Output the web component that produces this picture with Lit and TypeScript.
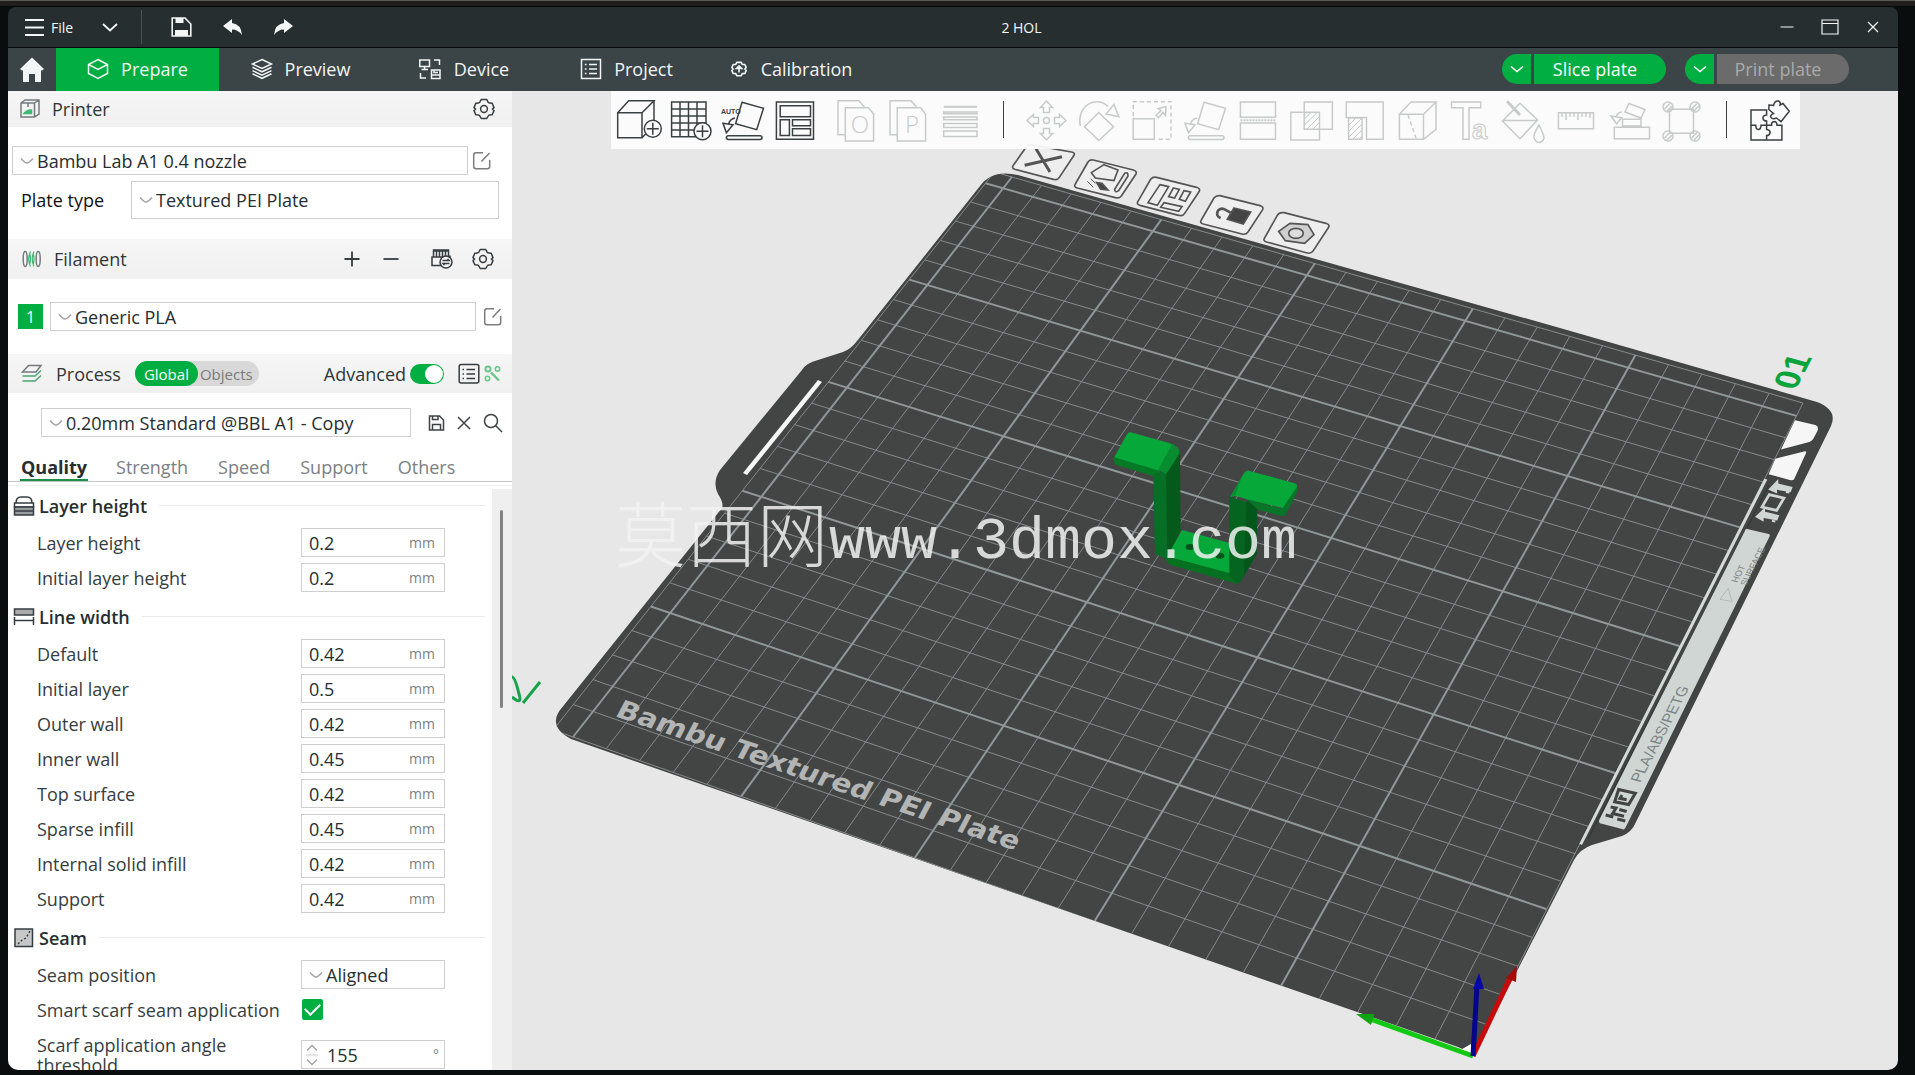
import { LitElement, html, svg, css } from "lit";
import { customElement, property, state } from "lit/decorators.js";
import { classMap } from "lit/directives/class-map.js";

type Pt = [number, number];

/* ---------- shared icons ---------- */

const icon = (w: number, h: number, body: unknown, cls = "icon") =>
  html`<svg class=${cls} width=${w} height=${h} viewBox="0 0 ${w} ${h}" aria-hidden="true">${body}</svg>`;

const chevron = icon(14, 8, svg`<path d="M1 1.5 Q5 6 7 6 Q9 6 13 1.5" />`, "icon chevron");

const gear = icon(22, 22, svg`
  <path d="M8.2 1.5 H13.8 L15.2 4.4 Q16 5 17 4.9 L19.2 5.2 L21 9.6 L19.4 11 L21 12.6 L19.2 16.8 L16.6 16.9 Q15.6 17.2 15.2 18 L13.8 20.5 H8.2 L6.8 18 Q6.2 17.2 5.4 16.9 L2.8 16.8 L1 12.6 L2.6 11 L1 9.6 L2.8 5.2 L5.4 4.9 Q6.4 4.8 6.8 4.2 Z" stroke-linejoin="round" />
  <circle cx="11" cy="11" r="3.4" />`);

const edit = icon(20, 20, svg`<path d="M11 1.7 H4 Q1.7 1.7 1.7 4 V15.5 Q1.7 17.7 4 17.7 H15.5 Q17.7 17.7 17.7 15.5 V9 M9.5 10.5 L17.5 2" />`, "icon soft");

const tabIcons = {
  prepare: icon(22, 22, svg`<path d="M11 1.5 L20.5 6.5 V15.5 L11 20.5 L1.5 15.5 V6.5 Z M1.5 6.5 L11 11.5 L20.5 6.5" />`),
  preview: icon(22, 22, svg`<path d="M11 1.5 L20.5 6 L11 10.5 L1.5 6 Z M1.5 9.3 L11 13.8 L20.5 9.3 M1.5 12.6 L11 17.1 L20.5 12.6 M1.5 15.8 L11 20.3 L20.5 15.8" />`),
  device: icon(24, 22, svg`<path d="M1.8 2 H11.5 V8.5 H1.8 Z M6.6 8.5 V11.5 M3.5 11.5 H10 M16 2 H21.5 V7 M2.5 15 V20 H8 M13.5 12 H22 V20.5 H13.5 Z M16 12 V14.5 H20 M13.5 17 H22" />`),
  project: icon(22, 22, svg`<path d="M1.5 1.5 H20.5 V20.5 H1.5 Z M9 6.5 H17 M9 11 H17 M9 15.5 H17 M4.8 6.5 H6.6 M4.8 11 H6.6 M4.8 15.5 H6.6" />`),
  calibration: icon(22, 18, svg`<g transform="translate(4 1) scale(0.89)"><path d="M6.5 1.5 H11.5 L12.6 3.8 L15.5 3.9 L17 7.2 L15.6 9 L17 10.8 L15.5 14.1 L12.6 14.2 L11.5 16.5 H6.5 L5.4 14.2 L2.5 14.1 L1 10.8 L2.4 9 L1 7.2 L2.5 3.9 L5.4 3.8 Z" stroke-linejoin="round" stroke-width="1.8" /><path d="M9 13 V6 M6 8.4 L9 5.4 L12 8.4 Z" stroke-width="1.8" /></g>`),
};

/* ---------- toolbar drawings, each on a 44 x 44 field ---------- */

const plusBadge = (cx: number, cy: number) => svg`
  <circle class="badge" cx=${cx} cy=${cy} r="8.5" />
  <path d="M${cx - 6} ${cy} H${cx + 6} M${cx} ${cy - 6} V${cy + 6}" />`;
const layFlat = svg`
  <path d="M21 5.3 L42.5 11.3 L35.7 32.7 L14.6 26.7 Z M2 26.3 L12 27.7 L5.4 35.7 Z M14 21 Q9 22 7.5 27" />
  <rect x="5.4" y="38.7" width="35.6" height="3.8" rx="1.9" />`;
const sheets = (letter: string) => svg`
  <path d="M11 37.7 H4 V3.7 H25 L30 9.5 V10.7 M11.3 10.7 H34.5 L39.6 17 V44 H11.3 Z" />
  <text class="thin" x="26" y="36" text-anchor="middle" font-size="24">${letter}</text>`;
const cross = [0, 90, 180, 270].map(
  (a) => svg`<path transform="rotate(${a} 22.5 23.5)" d="M22.5 4 L28.5 10.5 H25.5 V15.5 H19.5 V10.5 H16.5 Z" />`,
);

const addTools = [
  { name: "Add", body: svg`<path d="M25 40.7 H0.7 V15.7 H25 Z M0.7 15.7 L11.7 3.7 H37 L25 15.7 M37 3.7 V23 M25 40.7 L29 36.5" />${plusBadge(35.8, 31.7)}` },
  { name: "Add plate", body: svg`<path d="M2.6 5 H37 V39.7 H2.6 Z M11 5 V39.7 M19.5 5 V39.7 M28 5 V39.7 M2.6 12 H37 M2.6 19 H37 M2.6 26 H37 M2.6 33 H37" />${plusBadge(33.5, 34.3)}` },
  { name: "Auto orient", body: svg`${layFlat}<text class="tiny" x="0" y="17" font-size="7">AUTO</text>` },
  { name: "Arrange", body: svg`<path d="M3.4 5 H40.5 V42.3 H3.4 Z M7.2 8.7 H37.5 V19.7 H7.2 Z M7.2 22.7 H16.4 V38.5 H7.2 Z M19.5 22.7 H37.5 V28.7 H19.5 Z M19.5 31.7 H37.5 V38.5 H19.5 Z" />` },
];
const splitTools = [
  { name: "Split to objects", body: sheets("O") },
  { name: "Split to parts", body: sheets("P") },
  { name: "Variable layer height", body: svg`<path d="M5.7 9.8 H39" stroke-width="2" /><path d="M5.7 15 H39 V16.8 H5.7 Z M5.7 20 H39 V22.8 H5.7 Z M5.7 26.4 H39 V30.6 H5.7 Z M5.7 34 H39 V39.6 H5.7 Z" />` },
];
const editTools = [
  { name: "Move", body: svg`<circle cx="22.5" cy="23.5" r="3" />${cross}` },
  { name: "Rotate", body: svg`<path d="M21.8 15.5 L36.5 29.7 L21.8 43.5 L7.5 29.7 Z M3.4 29 A17 19 0 0 1 31 9.5 M37 7.5 L41.7 19.7 L29 17 Z" />` },
  { name: "Scale", body: svg`<path d="M3.2 21.7 H24.3 V42.3 H3.2 Z M26 18.5 L31 13.5 L28 11.5 L36 9.7 L35.5 18.5 L33 15.5 L28.5 20.7 Z" /><path d="M3.2 19 V4.7 H41 V42.3 H27" stroke-dasharray="4 3" />` },
  { name: "Lay on face", body: layFlat },
  { name: "Cut", body: svg`<path d="M4.4 5 H39.5 V20.3 H4.4 Z M4.4 26 H39.5 V42.3 H4.4 Z" /><path d="M4.4 23.2 H39.5" stroke-width="2" stroke-dasharray="2 1" />` },
  { name: "Mesh boolean", body: svg`<path d="M15.2 5 H43.4 V32.3 H15.2 Z M1.8 15.3 H30.5 V43 H1.8 Z" /><path d="M15.5 22 L22 15.5 M15.5 28 L28 15.5 M18 32 L30 20 M24 32 L30 26" stroke-width="1" />` },
  { name: "Support painting", body: svg`<path d="M4.3 20.5 V5 H41.2 V42.3 H24.5 V20.5 Z M6.6 21 H20 V42.3 H6.6 Z" /><path d="M7 28 L14 21 M7 34 L20 21 M7 40 L20 27 M11 42 L20 33 M17 42 L20 39" stroke-width="1" />` },
  { name: "Seam painting", body: svg`<path d="M4.4 17.3 H28.5 V42.3 H4.4 Z M4.4 17.3 L16 5 H41 L28.5 17.3 M41 5 V32.3 L28.5 42.3" /><path d="M13 18 L21 41" stroke-dasharray="4 3" />` },
  { name: "Text", body: svg`<path d="M3.6 5 H32.7 V10.7 H21 V42.3 H15 V10.7 H3.6 Z" /><text class="outline" x="24" y="42" font-size="27">a</text>` },
  { name: "Color painting", body: svg`<path d="M19 6.3 L36.6 23 L19 41.7 L1.5 24 Z M1.5 23.5 H36.6 M38 28 Q32 38 33 41 Q35 45.5 38 45.5 Q42 45 43 41 Q43 38 38 28 Z" /><path d="M6 4.3 L19 18" stroke-width="3" />` },
  { name: "Measure", body: svg`<path d="M4.4 15.7 H39.5 V31.7 H4.4 Z M8 16 V20 M12 16 V23 M16 16 V20 M20 16 V20 M24 16 V23 M28 16 V20 M32 16 V20 M36 16 V21" />` },
  { name: "Assembly", body: svg`<path d="M7.3 30.3 H42.5 V41.7 H7.3 Z M15.5 22.3 H34 V29 H15.5 Z M22 6.5 L38 12.5 L34 21 L18 15 Z M4 19 L14.7 20.7 L9.6 26.7 Z M14.7 15 Q10 16 9 20" />` },
  { name: "Fuzzy skin", body: svg`<path d="M9.5 12.3 H33.5 V36.3 H9.5 Z" />${[[8, 10], [35, 10], [8, 39], [35, 39]].map(([x, y]) => svg`<circle cx=${x} cy=${y} r="5" /><path d="M${x - 3.5} ${y + 2} L${x + 2} ${y - 3.5} M${x - 1} ${y + 4} L${x + 4} ${y - 1}" />`)}` },
];
const assemblyView = svg`
  <path d="M3 13 H18.6 V18 Q14.5 18.5 15 21.5 Q15.5 24 18.6 24 V28.3 H13 Q13 32.5 10.3 32.5 Q7.6 32.5 7.8 28.3 H3 Z" />
  <path d="M3 28.3 V43 H33.9 V28.3 H29 Q29 24.5 26 24.5 Q23.3 24.8 23.5 28.3 H18.6 V32.5 Q22.5 33 22 36 Q21.5 38.5 18.6 38.5 V43" />
  <path d="M21 8 L25.5 8.5 Q26.5 3.5 30.6 4 Q33 5 32 8 L35 6.5 L41.3 14.3 L33 24.7 L28.5 21 Q24 23 22.5 19.5 Q23 17 25.5 16.5 L20.8 12.5 Z" />`;

/* ---------- build plate projection ---------- */

const SIZE = 256;

/** Projective map that takes the unit square to the given quad. */
function projection(p00: Pt, p10: Pt, p11: Pt, p01: Pt) {
  const dx1 = p10[0] - p11[0], dx2 = p01[0] - p11[0], sx = p00[0] - p10[0] + p11[0] - p01[0];
  const dy1 = p10[1] - p11[1], dy2 = p01[1] - p11[1], sy = p00[1] - p10[1] + p11[1] - p01[1];
  const det = dx1 * dy2 - dx2 * dy1;
  const g = (sx * dy2 - dx2 * sy) / det;
  const h = (dx1 * sy - sx * dy1) / det;
  const a = p10[0] - p00[0] + g * p10[0], b = p01[0] - p00[0] + h * p01[0];
  const d = p10[1] - p00[1] + g * p10[1], e = p01[1] - p00[1] + h * p01[1];
  return (u: number, v: number): Pt => {
    const w = g * u + h * v + 1;
    return [(a * u + b * v + p00[0]) / w, (d * u + e * v + p00[1]) / w];
  };
}

const unit = projection([1473, 1055], [1803, 403], [1012, 177], [573, 737]);
const bed = (x: number, y: number) => unit(x / SIZE, y / 250).map((n) => n.toFixed(1)).join(" ");

const marks = [...Array(26).keys()].map((i) => i * 10);
const gridPath = (values: number[]) =>
  values.map((v) => `M${bed(v, 0)} L${bed(v, SIZE)} M${bed(0, v)} L${bed(SIZE, v)}`).join(" ");
const thinGrid = gridPath([...marks.filter((v) => v % 50 !== 0), 0, SIZE]);
const boldGrid = gridPath(marks.filter((v) => v % 50 === 0 && v > 0));

const platePath = `M1018 175 L1560 328 L1817 402 Q1838 410 1831 426 L1636 822 Q1632 832 1622 836
  L1592 845 Q1580 849 1574 860 L1478 1047 Q1472 1054 1458 1047 L571 739 Q548 727 560 710 L722 508 Q724 503 718 494 Q712 482 720 470
  L802 370 Q806 363 818 360 L843 352 Q851 349 857 341 L980 186 Q992 169 1018 175 Z`;

const scene = svg`
  <defs><clipPath id="plate-clip"><path d=${platePath} /></clipPath></defs>
  <path class="plate" d=${platePath} />
  <g clip-path="url(#plate-clip)">
    <path class="grid" d=${thinGrid} />
    <path class="grid bold" d=${boldGrid} />
  </g>
  <path class="slot" d="M818 380 L822 382 L747 475 L743 473 Z" />
  <text class="plate-name" transform="matrix(0.948 0.318 -0.42 0.8 614 716)">Bambu Textured PEI Plate</text>
  <path class="mark" d="M512 677 Q515 677 519 694 Q522 703 516 700 L512 697 M540 682 L523 703" />

  <g transform="translate(1480 330) scale(0.3333 0.3444)">
    <path class="slot" d="M945 262 L1006 276 Q1018 280 1012 294 L1000 316 Q997 322 988 325 L903 347 Z M886 374 L975 352 Q980 352 978 358 L943 432 Q940 438 932 436 L866 419 Z" />
    <path d="M853 432 L862 434 L306 1495 L298 1492 Z" fill="#d3dad8" />
    <path d="M867 450 L614 932 L324 1478" stroke="#2f3535" stroke-width="3" fill="none" />
    <path d="M798 577 L866 592 Q872 594 868 601 L436 1446 Q432 1452 426 1449 L360 1432 Q355 1428 358 1422 Z" fill="#cfd6d4" />
    <path d="M868 478 L912 488 L890 524 L846 514 Z" fill="none" stroke="#cfd6d4" stroke-width="8" />
    <path d="M870 462 L892 440 L892 448 L934 458 L930 468 L888 460 L888 470 Z M918 470 L928 472 M830 542 L852 522 L852 530 L894 540 L890 550 L848 542 L848 552 Z M876 554 L886 556" fill="#cfd6d4" stroke="#cfd6d4" stroke-width="6" />
    <path d="M745 750 L720 782 L756 788 Z" fill="none" stroke="#a3abaa" stroke-width="2" />
    <path d="M392 1385 L408 1388 L398 1404 L432 1412 M377 1408 L400 1414 M412 1420 L436 1426 M418 1392 L440 1398 M416 1334 L466 1345 L446 1378 L404 1370 Z M426 1350 L420 1360 L440 1364" fill="none" stroke="#424444" stroke-width="9" />
  </g>
  <text class="plate-note" font-size="15" transform="matrix(0.46 -0.888 0.97 0.26 1640 783)">PLA/ABS/PETG</text>
  <text class="plate-note" font-size="9" transform="matrix(0.46 -0.888 0.97 0.26 1737 583)">HOT</text>
  <text class="plate-note" font-size="9" transform="matrix(0.46 -0.888 0.97 0.26 1746 586)">SURFACE</text>
  <text class="plate-no" transform="matrix(0.46 -0.888 0.97 0.26 1795 391)">01</text>

  <g class="tags" transform="translate(980 140) scale(0.3333)">
    <path class="card" d="M150 14 L274 36 Q286 38 282 46 L238 112 Q232 122 220 118 L104 88 Q94 84 100 76 L138 22 Q142 14 150 14 Z" />
    <path class="card" d="M340 60 L460 90 Q472 94 468 102 L424 168 Q418 176 406 173 L292 144 Q280 140 286 132 L324 66 Q328 58 340 60 Z" />
    <path class="card" d="M530 112 L650 142 Q662 146 658 154 L614 220 Q608 230 596 226 L480 196 Q468 192 474 184 L512 118 Q518 110 530 112 Z" />
    <path class="card" d="M720 167 L840 197 Q852 201 848 209 L804 276 Q798 285 786 282 L670 252 Q658 248 664 240 L702 174 Q708 166 720 167 Z" />
    <path class="card" d="M912 218 L1038 250 Q1050 254 1046 262 L1000 332 Q994 342 982 339 L860 306 Q848 302 854 294 L892 226 Q898 216 912 218 Z" />
    <path d="M168 26 L210 96 M134 76 L246 50" stroke-width="9" />
    <path d="M372 74 L414 90 L402 122 L346 114 L334 98 Z M434 100 Q444 94 444 108 L416 152 Q404 160 404 148 Z" />
    <path d="M322 124 L340 142 M332 116 L346 130" stroke-width="3" />
    <path d="M350 128 L366 130 L384 150 L362 148 Z" fill="#444" />
    <path d="M540 134 L566 140 L532 196 L504 188 Z M580 144 L598 148 L584 174 L566 170 Z M612 152 L632 156 L616 184 L598 178 Z M552 188 L606 200 L596 214 L542 202 Z" />
    <path d="M762 204 L812 216 L790 252 L742 238 Z" fill="#444" />
    <path d="M756 220 L734 208 Q722 202 714 212 Q706 228 722 234" stroke-width="8" />
    <path d="M930 250 L984 254 L1002 284 L974 310 L916 302 L896 274 Z" fill="#cfcfcf" />
    <ellipse cx="948" cy="280" rx="22" ry="15" fill="#ddd" />
  </g>

  <g transform="translate(1060 400) scale(0.3333)">
    <path d="M160 170 L300 212 L300 235 L280 228 L170 195 Q160 190 160 170 Z" fill="#057a26" />
    <path d="M280 222 L322 214 L322 478 L285 462 Z" fill="#076e25" />
    <path d="M318 218 L360 156 L362 392 L322 472 Z" fill="#055a1b" />
    <path d="M212 97 L330 130 Q358 140 358 160 L318 222 Q306 212 290 210 L163 172 L200 104 Q205 96 212 97 Z" fill="#07a83a" />
    <path d="M336 132 Q358 140 358 160 L318 222 Q306 212 294 211 Z" fill="#088c30" />
    <path d="M366 390 L512 430 L520 524 L320 472 Z" fill="#07a83a" />
    <ellipse cx="390" cy="441" rx="13" ry="9" fill="#04531a" />
    <ellipse cx="480" cy="467" rx="13" ry="9" fill="#04531a" />
    <path d="M318 468 L510 520 L540 548 Q532 552 520 548 L330 494 Q316 488 318 468 Z" fill="#05701f" />
    <path d="M508 290 L592 316 L590 462 L540 548 Q520 550 508 522 Z" fill="#05641f" />
    <path d="M560 302 L592 316 L590 462 L552 528 Z" fill="#04561a" />
    <path d="M560 298 L664 326 L712 256 L713 272 Q695 312 676 344 Q670 350 660 347 L592 328 Z" fill="#067527" />
    <path d="M566 212 L704 250 Q714 254 710 262 L668 324 L560 298 Q524 284 510 292 L552 220 Q558 210 566 212 Z" fill="#07a83a" />
    <path d="M545 232 L526 286 Q516 286 510 292 Z" fill="#088c30" />
  </g>

  <path d="M1457 1052 L1471 1044 L1473 1056 Z" fill="#fff" />
  <path d="M1473 1056 L1370 1019" stroke="#12c812" stroke-width="5" />
  <path d="M1356 1014 L1374 1014 L1371 1025 Z" fill="#10a510" />
  <path d="M1473 1056 L1511 976" stroke="#c90a0a" stroke-width="5" />
  <path d="M1517 966 L1516 982 L1506 978 Z" fill="#a50808" />
  <path d="M1473 1056 L1477 986" stroke="#05058c" stroke-width="5" />
  <path d="M1479 973 L1484 989 L1473 989 Z" fill="#0808a8" />

  <text class="watermark"><tspan class="han" x="615" y="561">莫西网</tspan><tspan x="829" y="558">www.3dmox.com</tspan></text>
`;

/* ---------- settings data ---------- */

type Row = { label: string; value: string; kind?: "select" | "check" | "spin" };
const mm = (label: string, value: string): Row => ({ label, value });

const sections: { title: string; icon: unknown; rows: Row[] }[] = [
  {
    title: "Layer height",
    icon: icon(22, 22, svg`<path d="M3 8 Q3 2 8 2 H14 Q19 2 19 8 M1.5 8 H20.5 V12 H1.5 Z" /><path d="M1.5 12 H20.5 V16 H1.5 Z M1.5 16 H20.5 V20 H1.5 Z" fill="#9a9d9e" />`),
    rows: [mm("Layer height", "0.2"), mm("Initial layer height", "0.2")],
  },
  {
    title: "Line width",
    icon: icon(22, 22, svg`<path d="M1.5 3 H20.5 V9 H1.5 Z" fill="#a9abac" /><path d="M1.5 11 V19 M20.5 11 V19 M1.5 14.5 H20.5" />`),
    rows: [
      mm("Default", "0.42"), mm("Initial layer", "0.5"), mm("Outer wall", "0.42"), mm("Inner wall", "0.45"),
      mm("Top surface", "0.42"), mm("Sparse infill", "0.45"), mm("Internal solid infill", "0.42"), mm("Support", "0.42"),
    ],
  },
  {
    title: "Seam",
    icon: icon(22, 22, svg`<path d="M2 2 H19.5 V19.5 H2 Z" fill="#c6c8c8" /><path d="M5 17 L9 13 L13 11 L17 4" stroke-dasharray="2 2" />`),
    rows: [
      { label: "Seam position", value: "Aligned", kind: "select" },
      { label: "Smart scarf seam application", value: "on", kind: "check" },
      { label: "Scarf application angle threshold", value: "155", kind: "spin" },
    ],
  },
];

const shared = css`
  * { box-sizing: border-box; }
  button, input, select { font: inherit; color: inherit; margin: 0; }
  button { border: 0; background: none; padding: 0; display: inline-flex; align-items: center; justify-content: center; cursor: pointer; }
  .icon { display: block; flex: none; fill: none; stroke: currentColor; stroke-width: 1.5; overflow: visible; }
  .chevron { color: #a4a4a4; }
  .soft { color: #7d7d7d; }
`;

/* ---------- drop-down ---------- */

@customElement("pick-box")
class PickBox extends LitElement {
  @property() value = "";
  @property() name = "";

  static styles = [shared, css`
    :host { display: block; min-width: 0; }
    .box { height: 100%; display: flex; align-items: center; border: 1px solid #cecece; background: #fff; padding-left: 7px; }
    .pick { appearance: none; border: 0; outline: 0; background: transparent; flex: 1; min-width: 0; height: 100%; padding: 0 0 0 3px; color: #262e30; }
  `];

  render() {
    return html`<label class="box">${chevron}
      <select class="pick" aria-label=${this.name}><option>${this.value}</option></select></label>`;
  }
}

/* ---------- left panel ---------- */

@customElement("side-panel")
class SidePanel extends LitElement {
  @state() private page = "Quality";
  @state() private scope = "Global";

  static styles = [shared, css`
    :host { display: flex; flex-direction: column; width: 504px; flex: none; min-height: 0; background: #fff; color: #363d40; line-height: 24px; }
    .head { display: flex; align-items: center; background: linear-gradient(#f6f6f6, #f0f0f0); flex: none; }
    .head h2 { margin: 0; font-size: 18px; font-weight: 400; color: #2f373a; flex: 1; }
    .printer-head { height: 36px; padding: 0 17px 0 11px; gap: 11px; }
    .filament-head { height: 40px; padding: 0 18px 0 14px; gap: 12px; margin-top: 20px; }
    .process-head { height: 39px; padding: 0 10px 0 13px; margin-top: 23px; }
    .process-head h2 { flex: none; margin: 0 14px 0 13px; }
    .filament-tools { display: flex; align-items: center; gap: 19px; }
    .ams { margin-left: 10px; }
    .line { display: flex; align-items: center; flex: none; }
    .line pick-box { flex: 1; height: 29px; }
    .printer-line { margin-top: 19px; padding: 0 20px 0 4px; gap: 4px; }
    .type-line { margin-top: 6px; padding: 0 13px; color: #111; }
    .type-line .name { width: 110px; }
    .type-line pick-box { height: 38px; }
    .filament-line { margin-top: 23px; padding: 0 9px 0 10px; gap: 7px; }
    .swatch { width: 25px; height: 25px; background: #00ae42; color: #fff; font-size: 16px; }
    .preset-line { margin-top: 15px; padding: 0 9px 0 33px; gap: 12px; color: #3d4446; }
    .preset-line pick-box { margin-right: 5px; }
    .scope { display: flex; border-radius: 13px; background: #d8d8d8; height: 25px; font-size: 15px; }
    .scope button { padding: 0 6px 0 2px; border-radius: 13px; color: #7a7a7a; }
    .scope button.on { background: #00ae42; color: #fff; padding: 0 9px; }
    .advanced { display: flex; align-items: center; margin-left: auto; gap: 4px; font-size: 18px; color: #2f373a; }
    .toggle { appearance: none; width: 34px; height: 20px; border-radius: 10px; background: #00ae42; display: flex; align-items: center; justify-content: flex-end; padding: 0 1px; }
    .toggle::before { content: ""; width: 18px; height: 18px; border-radius: 9px; background: #fff; }
    .list { margin: 0 3px 0 14px; }
    .cut { color: #6cc48a; }
    .tabs { display: flex; margin-top: 18px; height: 27px; padding-left: 12px; gap: 26px; border-bottom: 1px solid #c2c6c5; flex: none; }
    .tabs button { color: #7b8082; padding: 0 2px; border-bottom: 2px solid transparent; }
    .tabs button.on { color: #262e30; font-weight: 700; padding: 0 1px; border-color: #1d8f4b; }
    .settings { display: flex; flex: 1; min-height: 0; margin-top: 3px; border-top: 1px solid #f1f1f1; padding-top: 3px; }
    .rows { flex: 1; min-width: 0; overflow: hidden; padding-left: 5px; }
    .track { width: 20px; background: #efefef; padding: 21px 8px; }
    .thumb { width: 3px; height: 198px; border-radius: 2px; background: #828282; }
    .section { margin-bottom: 5px; }
    .section-head { display: flex; align-items: center; height: 33px; margin-bottom: 3px; gap: 4px; }
    .section-head h3 { margin: 0; font-size: 18px; font-weight: 600; color: #262e30; }
    .section-head::after { content: ""; flex: 1; height: 1px; background: #eaeaea; margin: 0 7px 0 8px; }
    .row { display: flex; align-items: center; height: 35px; padding: 0 47px 0 24px; }
    .row.tall { height: 55px; }
    .row .name { flex: 1; line-height: 20px; }
    .tall .name { padding-right: 60px; }
    .field { width: 144px; height: 29px; border: 1px solid #cecece; display: flex; align-items: center; padding: 0 9px 0 7px; background: #fff; }
    .value { border: 0; outline: 0; padding: 0; background: none; flex: 1; min-width: 0; width: 40px; color: #262e30; }
    .unit { font-size: 14px; color: #7b7f80; }
    .spin { padding: 0 5px 0 4px; gap: 9px; }
    .row pick-box { width: 144px; height: 29px; }
    .check-cell { width: 144px; display: flex; }
    .check { appearance: none; width: 21px; height: 21px; border-radius: 2px; background: #00ae42; margin-left: 1px; display: grid; place-items: center; }
    .check::before { content: ""; width: 13px; height: 7px; border: solid #fff; border-width: 0 0 2px 2px; rotate: -45deg; translate: 0 -2px; }
  `];

  private renderField(row: Row, id: string) {
    switch (row.kind) {
      case "select":
        return html`<pick-box value=${row.value} name=${row.label}></pick-box>`;
      case "check":
        return html`<span class="check-cell"><input class="check" type="checkbox" id=${id} checked /></span>`;
      case "spin":
        return html`<span class="field spin">
          ${icon(12, 22, svg`<path d="M1 6.5 L6 1.5 L11 6.5 M1 15.5 L6 20.5 L11 15.5" /><path d="M0 11 H12" stroke="#ddd" />`, "icon chevron")}
          <input class="value" id=${id} .value=${row.value} /><span class="unit">°</span></span>`;
      default:
        return html`<span class="field"><input class="value" id=${id} .value=${row.value} /><span class="unit">mm</span></span>`;
    }
  }

  render() {
    return html`
      <div class="head printer-head">
        ${icon(22, 22, svg`<path d="M2 5 L6 2 H20 V16 L15.5 19 H2 Z M2 5 H15.5 V19 M15.5 5 L20 2" stroke="#747b7d" /><path d="M9 5 V9" stroke="#747b7d" /><path d="M5 15.5 Q8 11.5 12.5 12 V15.5 Z" fill="#3fb974" stroke="#3fb974" />`)}
        <h2>Printer</h2>
        <button aria-label="Printer settings">${gear}</button>
      </div>
      <div class="line printer-line">
        <pick-box value="Bambu Lab A1 0.4 nozzle" name="Printer"></pick-box>
        <button aria-label="Edit printer">${edit}</button>
      </div>
      <div class="line type-line"><span class="name">Plate type</span><pick-box value="Textured PEI Plate" name="Plate type"></pick-box></div>

      <div class="head filament-head">
        ${icon(20, 20, svg`<ellipse cx="3.2" cy="10" rx="2" ry="7.5" stroke="#747b7d" /><path d="M8.5 2.5 Q5 10 8.5 17.5 M12 2.5 Q8.5 10 12 17.5 M7.5 4 Q9.5 10 7.5 16 M11 4 Q13 10 11 16" stroke="#3fb974" stroke-width="1.2" /><ellipse cx="16.2" cy="10" rx="2" ry="7.5" stroke="#747b7d" />`)}
        <h2>Filament</h2>
        <span class="filament-tools">
          <button aria-label="Add filament">${icon(20, 20, svg`<path d="M2.5 10 H17.5 M10 2.5 V17.5" stroke-width="1.8" />`)}</button>
          <button aria-label="Remove filament">${icon(20, 20, svg`<path d="M2.5 10 H17.5" stroke-width="1.8" />`)}</button>
          <button class="ams" aria-label="Sync filaments">${icon(23, 22, svg`<path d="M11 17.5 H2 V9 H20 V7.5 M3.5 9 V2 H18.5 V8 M6.5 3 V9 M9.5 3 V9 M12.5 3 V9 M15.5 3 V8 M3.5 3 H18.5" /><circle cx="16" cy="14" r="6" fill="#f3f3f3" /><path d="M12.5 12.5 H19 L17.5 11 M19.5 15.5 H13 L14.5 17" />`)}</button>
          <button aria-label="Filament settings">${gear}</button>
        </span>
      </div>
      <div class="line filament-line">
        <button class="swatch">1</button>
        <pick-box value="Generic PLA" name="Filament"></pick-box>
        <button aria-label="Edit filament">${edit}</button>
      </div>

      <div class="head process-head">
        ${icon(22, 22, svg`<path d="M7.5 2.5 H20 L15 9 H1.5 Z" stroke="#747b7d" /><path d="M1.5 13 H14 L20 7.5 M1.5 18 H14 L20 12.5" stroke="#4aa874" />`)}
        <h2>Process</h2>
        <span class="scope">${["Global", "Objects"].map((s) => html`
          <button class=${classMap({ on: this.scope === s })} @click=${() => (this.scope = s)}>${s}</button>`)}</span>
        <label class="advanced">Advanced<input class="toggle" type="checkbox" checked /></label>
        <button class="list" aria-label="Parameter table">${icon(22, 22, svg`<rect x="1.2" y="1.5" width="19.6" height="18.5" rx="2" /><path d="M8.5 6.5 H17 M8.5 11 H17 M8.5 15.5 H17 M4.5 6.5 H6 M4.5 11 H6 M4.5 15.5 H6" />`)}</button>
        <button class="cut" aria-label="Compare presets">${icon(19, 20, svg`<circle cx="5" cy="5" r="2.6" stroke-width="2" /><path d="M8 8.5 L16 16.5" stroke-width="2.4" /><circle cx="14.5" cy="5" r="2.2" /><circle cx="4.5" cy="14.5" r="2.2" />`)}</button>
      </div>
      <div class="line preset-line">
        <pick-box value="0.20mm Standard @BBL A1 - Copy" name="Process preset"></pick-box>
        <button aria-label="Save preset">${icon(17, 18, svg`<path d="M1.5 2 H11.5 L15.5 6 V16 H1.5 Z M4.5 2 V5.5 H10 V2 M4.5 16 V10.5 H12.5 V16" />`)}</button>
        <button aria-label="Delete preset">${icon(14, 14, svg`<path d="M1 1 L13 13 M13 1 L1 13" />`)}</button>
        <button aria-label="Search">${icon(20, 20, svg`<circle cx="8" cy="8" r="6.5" /><path d="M12.8 12.8 L19 19" />`)}</button>
      </div>
      <nav class="tabs">${["Quality", "Strength", "Speed", "Support", "Others"].map((t) => html`
        <button class=${classMap({ on: this.page === t })} @click=${() => (this.page = t)}>${t}</button>`)}</nav>

      <div class="settings">
        <div class="rows">${sections.map((s, i) => html`
          <section class="section">
            <div class="section-head">${s.icon}<h3>${s.title}</h3></div>
            ${s.rows.map((r, j) => html`
              <div class=${classMap({ row: true, tall: r.kind === "spin" })}>
                <label class="name" for="f${i}-${j}">${r.label}</label>${this.renderField(r, `f${i}-${j}`)}
              </div>`)}
          </section>`)}</div>
        <div class="track"><div class="thumb"></div></div>
      </div>`;
  }
}

/* ---------- 3D view ---------- */

@customElement("plate-view")
class PlateView extends LitElement {
  static styles = [shared, css`
    :host { display: flex; flex: 1; min-width: 0; position: relative; background: #e7e7e7; justify-content: center; align-items: flex-start; overflow: hidden; }
    .scene { position: absolute; inset: 0; width: 100%; height: 100%; display: block; }
    .plate { fill: #434545; }
    .grid { fill: none; stroke: #858a8a; stroke-width: 1; }
    .grid.bold { stroke: #8f9797; stroke-width: 2; }
    .slot { fill: #f6f6f6; }
    .mark { fill: none; stroke: #16a34a; stroke-width: 3; }
    .plate-name { font: bold 29px "DejaVu Sans", sans-serif; fill: #b3b5b5; }
    .plate-note { font-family: "Liberation Sans", sans-serif; fill: #7c8484; }
    .plate-no { font: bold 34px "Liberation Sans", sans-serif; fill: #0ba43c; }
    .tags { fill: none; stroke: #555; stroke-width: 5; }
    .tags .card { fill: #eeeeee; }
    .watermark { font: 60px "Liberation Mono", monospace; fill: #f2f2f2; fill-opacity: 0.85; }
    .han { font: 300 71px "Noto Sans CJK SC", sans-serif; }
    .tools { position: relative; display: flex; align-items: center; height: 58px; padding: 0 3px 2px 2px; background: rgba(252, 252, 252, 0.93); color: #3a4042; }
    .tools button { width: 52px; height: 44px; }
    .group { display: flex; }
    .split { margin-left: 9px; color: #c8caca; }
    .edit { color: #c8caca; }
    .edit button { width: 53px; }
    .tools .last { width: 54px; }
    .rule { width: 1px; height: 37px; background: #3a4042; margin: 0 16px 0 17px; }
    .badge { fill: #fbfbfb; }
    .thin, .tiny { fill: currentColor; stroke: none; font-family: "Open Sans", sans-serif; }
    .thin { font-weight: 300; }
    .tiny { font-weight: 700; font-family: "Liberation Sans", sans-serif; }
    .outline { fill: none; stroke-width: 1; font: bold 27px "Liberation Sans", sans-serif; }
  `];

  private renderTools(tools: { name: string; body: unknown }[], cls: string, disabled: boolean) {
    return html`<div class="group ${cls}">${tools.map((t) => html`
      <button aria-label=${t.name} ?disabled=${disabled}>${icon(44, 44, t.body)}</button>`)}</div>`;
  }

  render() {
    return html`
      <svg class="scene" viewBox="512 91 1386 979" preserveAspectRatio="xMidYMid slice" role="img" aria-label="Build plate">${scene}</svg>
      <div class="tools">
        ${this.renderTools(addTools, "add", false)}
        ${this.renderTools(splitTools, "split", true)}
        <span class="rule"></span>
        ${this.renderTools(editTools, "edit", true)}
        <span class="rule"></span>
        <button class="last" aria-label="Assembly view">${icon(44, 44, assemblyView)}</button>
      </div>`;
  }
}

/* ---------- application window ---------- */

@customElement("app-root")
class AppRoot extends LitElement {
  @state() private tab = "Prepare";

  static styles = [shared, css`
    :host { display: block; height: 100vh; background: #040707; font: 18px "Open Sans", "Noto Sans", "Noto Sans CJK SC", sans-serif; }
    .desk { height: 100%; display: flex; flex-direction: column; padding: 7px 17px 5px 8px; background: linear-gradient(#5a5a55 0 1px, #201f1d 1px 6px, #050808 6px 7px, #0a0d0d 7px); }
    .window { flex: 1; min-height: 0; display: flex; flex-direction: column; border-radius: 8px 8px 10px 10px; overflow: hidden; background: #272e2f; }
    .title-bar { display: flex; align-items: center; height: 41px; border-bottom: 1px solid #050808; color: #f4f6f6; font-size: 14px; flex: none; }
    .left { display: flex; align-items: center; width: 294px; padding-left: 16px; }
    .file { gap: 6px; }
    .more { margin-left: 29px; }
    .bar { width: 1px; height: 34px; background: #4a5254; margin: 0 29px 0 23px; }
    .quick { display: flex; align-items: center; gap: 30px; }
    .title { flex: 1; text-align: center; padding-right: 24px; }
    .win-btn { width: 43px; height: 40px; }
    .win { display: flex; padding-right: 4px; }
    .nav { display: flex; align-items: center; height: 43px; background: #3b4446; color: #f2f5f5; flex: none; }
    .home { width: 48px; height: 100%; }
    .tab { width: 163px; height: 100%; gap: 12px; padding-bottom: 1px; color: #f2f5f5; }
    .tab.on { background: #00ae42; }
    .actions { margin-left: auto; display: flex; gap: 19px; padding: 0 49px 2px 0; }
    .pair { display: flex; gap: 3px; }
    .pair button { height: 30px; background: #00ae42; color: #fff; }
    .pair .drop { width: 29px; border-radius: 15px 0 0 15px; }
    .pair .go { width: 132px; padding-right: 10px; border-radius: 0 15px 15px 0; }
    .pair .off { background: #6b6b6b; color: #a9aaaa; }
    .body { flex: 1; min-height: 0; display: flex; }
  `];

  render() {
    const tabs = [
      ["Prepare", tabIcons.prepare], ["Preview", tabIcons.preview], ["Device", tabIcons.device],
      ["Project", tabIcons.project], ["Calibration", tabIcons.calibration],
    ] as const;
    const drop = icon(14, 8, svg`<path d="M1 1.5 L7 6.5 L13 1.5" />`);
    const arrow = svg`<path d="M1 8 L10 1 V5 Q19 6 20 17 Q16 11.5 10 11.5 V15 Z" fill="currentColor" stroke="none" />`;
    return html`
      <div class="desk"><div class="window">
        <header class="title-bar">
          <div class="left">
            <button class="file">${icon(21, 18, svg`<path d="M1 2 H20 M1 9.5 H20 M1 17 H20" stroke-width="1.8" />`)}File</button>
            <button class="more" aria-label="More menus">${icon(16, 10, svg`<path d="M1 2 L8 8.5 L15 2" stroke-width="1.8" />`)}</button>
            <span class="bar"></span>
            <span class="quick">
              <button aria-label="Save">${icon(21, 20, svg`<path d="M1.2 1 H14 L19.8 7 V19 H1.2 Z" stroke-width="1.6" /><path d="M4.5 1 H12.5 V6 H4.5 Z M4 13 H17 V19 H4 Z" fill="currentColor" stroke="none" />`)}</button>
              <button aria-label="Undo">${icon(21, 18, arrow)}</button>
              <button aria-label="Redo">${icon(21, 18, svg`<g transform="matrix(-1 0 0 1 21 0)">${arrow}</g>`)}</button>
            </span>
          </div>
          <span class="title">2 HOL</span>
          <span class="win">
            <button class="win-btn" aria-label="Minimize">${icon(14, 14, svg`<path d="M0.5 7 H13.5" stroke-width="1.2" />`)}</button>
            <button class="win-btn" aria-label="Maximize">${icon(18, 16, svg`<path d="M1 1 H17 V15 H1 Z M1 4.5 H17" stroke-width="1.2" />`)}</button>
            <button class="win-btn" aria-label="Close">${icon(12, 12, svg`<path d="M1 1 L11 11 M11 1 L1 11" stroke-width="1.2" />`)}</button>
          </span>
        </header>
        <nav class="nav">
          <button class="home" aria-label="Home">${icon(26, 26, svg`<path d="M13 0.5 L25 12 L23 13.5 H22 V25 H16 V17 H10 V25 H4 V13.5 H3 L1 12 Z" fill="currentColor" stroke="none" />`)}</button>
          ${tabs.map(([name, glyph]) => html`
            <button class=${classMap({ tab: true, on: this.tab === name })} @click=${() => (this.tab = name)}>${glyph}${name}</button>`)}
          <div class="actions">
            <span class="pair"><button class="drop" aria-label="Slice options">${drop}</button><button class="go">Slice plate</button></span>
            <span class="pair"><button class="drop" aria-label="Print options">${drop}</button><button class="go off" disabled>Print plate</button></span>
          </div>
        </nav>
        <main class="body"><side-panel></side-panel><plate-view></plate-view></main>
      </div></div>`;
  }
}
